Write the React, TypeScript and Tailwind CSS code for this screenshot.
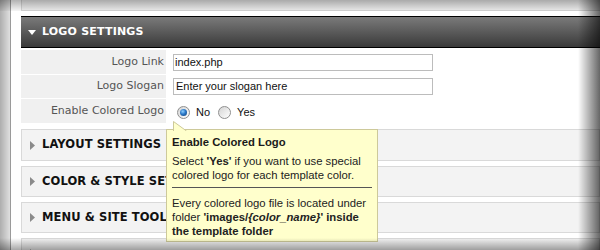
import React from "react";

function Radio({ checked }: { checked?: boolean }) {
  return (
    <span className="flex items-center justify-center w-[13px] h-[13px] rounded-full border border-[#8f8f8f] bg-[linear-gradient(135deg,#d4d4d4,#ffffff)] shrink-0">
      {checked && (
        <span className="block w-[7px] h-[7px] rounded-full bg-[radial-gradient(circle_at_40%_35%,#8fd0ff_0%,#2a78c8_45%,#123d70_100%)]" />
      )}
    </span>
  );
}

function Collapsed({ title, h }: { title?: string; h: string }) {
  return (
    <div className={`flex items-center border border-[#d9d9d9] bg-[#f3f3f3] ${h}`}>
      <svg width="5" height="9" viewBox="0 0 5 9" className="ml-[8px] mr-[7px]">
        <polygon points="0,0 5,4.5 0,9" fill="#8a8a8a" />
      </svg>
      {title && <span className="text-[11.5px] font-bold text-[#111] tracking-[0.1px]">{title}</span>}
    </div>
  );
}

export default function App() {
  return (
    <div className="relative w-[600px] h-[250px] overflow-hidden bg-white font-['DejaVu_Sans',sans-serif]">
      <div className="flex flex-col pl-[21px]">
        {/* previous panel bottom */}
        <div className="h-[11px] border-l border-b border-[#d9d9d9] bg-[#f3f3f3]" />
        {/* header */}
        <div className="mt-[5px] h-[32px] border-y border-black bg-[linear-gradient(to_bottom,#7a7a7a,#3a3a3a)] flex items-center">
          <svg width="8" height="5" viewBox="0 0 8 5" className="ml-[7px] mr-[6px]">
            <polygon points="0,0 8,0 4,5" fill="#ffffff" />
          </svg>
          <span className="text-[11px] font-bold text-white tracking-[0.2px]">LOGO SETTINGS</span>
        </div>
        {/* rows */}
        <div className="mt-[2px] flex flex-col gap-[1px]">
          <div className="flex h-[24px]">
            <div className="w-[145px] bg-[#f0f0f0] flex items-center justify-end pr-[2px] text-[11px] text-[#555]">Logo Link</div>
            <div className="flex-1 flex items-center pl-[7px]">
              <div className="w-[260px] h-[17px] border border-[#bcbcbc] flex items-center pl-[1px] font-['Liberation_Sans',sans-serif] text-[11px] text-[#111]">index.php</div>
            </div>
          </div>
          <div className="flex h-[23px]">
            <div className="w-[145px] bg-[#f0f0f0] flex items-center justify-end pr-[2px] text-[11px] text-[#555]">Logo Slogan</div>
            <div className="flex-1 flex items-center pl-[7px]">
              <div className="w-[260px] h-[17px] border border-[#bcbcbc] flex items-center pl-[2px] font-['Liberation_Sans',sans-serif] text-[11px] text-[#111]">Enter your slogan here</div>
            </div>
          </div>
          <div className="flex h-[24px]">
            <div className="w-[145px] bg-[#f0f0f0] flex items-center justify-end pr-[2px] text-[11px] text-[#555]">Enable Colored Logo</div>
            <div className="flex-1 flex items-center pl-[11px] pt-[3px] font-['Liberation_Sans',sans-serif] text-[11px] text-[#111]">
              <Radio checked />
              <span className="ml-[6px]">No</span>
              <span className="ml-[8px]"><Radio /></span>
              <span className="ml-[6px]">Yes</span>
            </div>
          </div>
        </div>
        {/* collapsed panels */}
        <div className="mt-[6px] flex flex-col gap-[5px]">
          <Collapsed title="LAYOUT SETTINGS" h="h-[32px]" />
          <Collapsed title="COLOR & STYLE SETTINGS" h="h-[31px]" />
          <Collapsed title="MENU & SITE TOOLS SETTINGS" h="h-[31px]" />
          <Collapsed h="h-[31px]" />
        </div>
      </div>

      {/* tooltip */}
      <div className="absolute left-[166px] top-[129px] w-[212px] h-[113px] border border-[#cdc99a] bg-[#ffffcc] px-[5px] pt-[5px] font-['Liberation_Sans',sans-serif] text-[11.3px] leading-[14px] text-[#222]">
        <svg width="15" height="10" viewBox="0 0 15 10" className="absolute left-[6px] top-[-9px]">
          <polygon points="0.5,0.5 13.5,10 0.5,10" fill="#ffffcc" />
          <polyline points="0.5,10 0.5,0.5 13.5,10" fill="none" stroke="#cdc99a" strokeWidth="1" />
        </svg>
        <div className="font-bold text-[#1a1a1a]">Enable Colored Logo</div>
        <div className="mt-[5px]">
          Select <b>'Yes'</b> if you want to use special colored logo for each template color.
        </div>
        <div className="mt-[5px] h-px bg-[#555]" />
        <div className="mt-[8px]">
          Every colored logo file is located under folder <b>'images/<i>{"{color_name}"}</i>' inside the template folder</b>
        </div>
      </div>

      {/* vignette */}
      <div className="pointer-events-none absolute left-0 top-0 bottom-0 w-[11px] bg-[linear-gradient(to_right,rgba(0,0,0,0.32),rgba(0,0,0,0.12))] border-r border-[rgba(0,0,0,0.12)]" />
      <div className="pointer-events-none absolute left-0 right-0 top-0 h-[11px] bg-[linear-gradient(to_bottom,rgba(0,0,0,0.3),rgba(0,0,0,0.04))]" />
      <div className="pointer-events-none absolute left-0 right-0 bottom-0 h-[12px] bg-[linear-gradient(to_top,rgba(0,0,0,0.35),rgba(0,0,0,0))]" />
      <div className="pointer-events-none absolute right-0 top-0 bottom-0 w-[22px] bg-[linear-gradient(to_left,rgba(0,0,0,0.6),rgba(0,0,0,0))]" />
    </div>
  );
}
